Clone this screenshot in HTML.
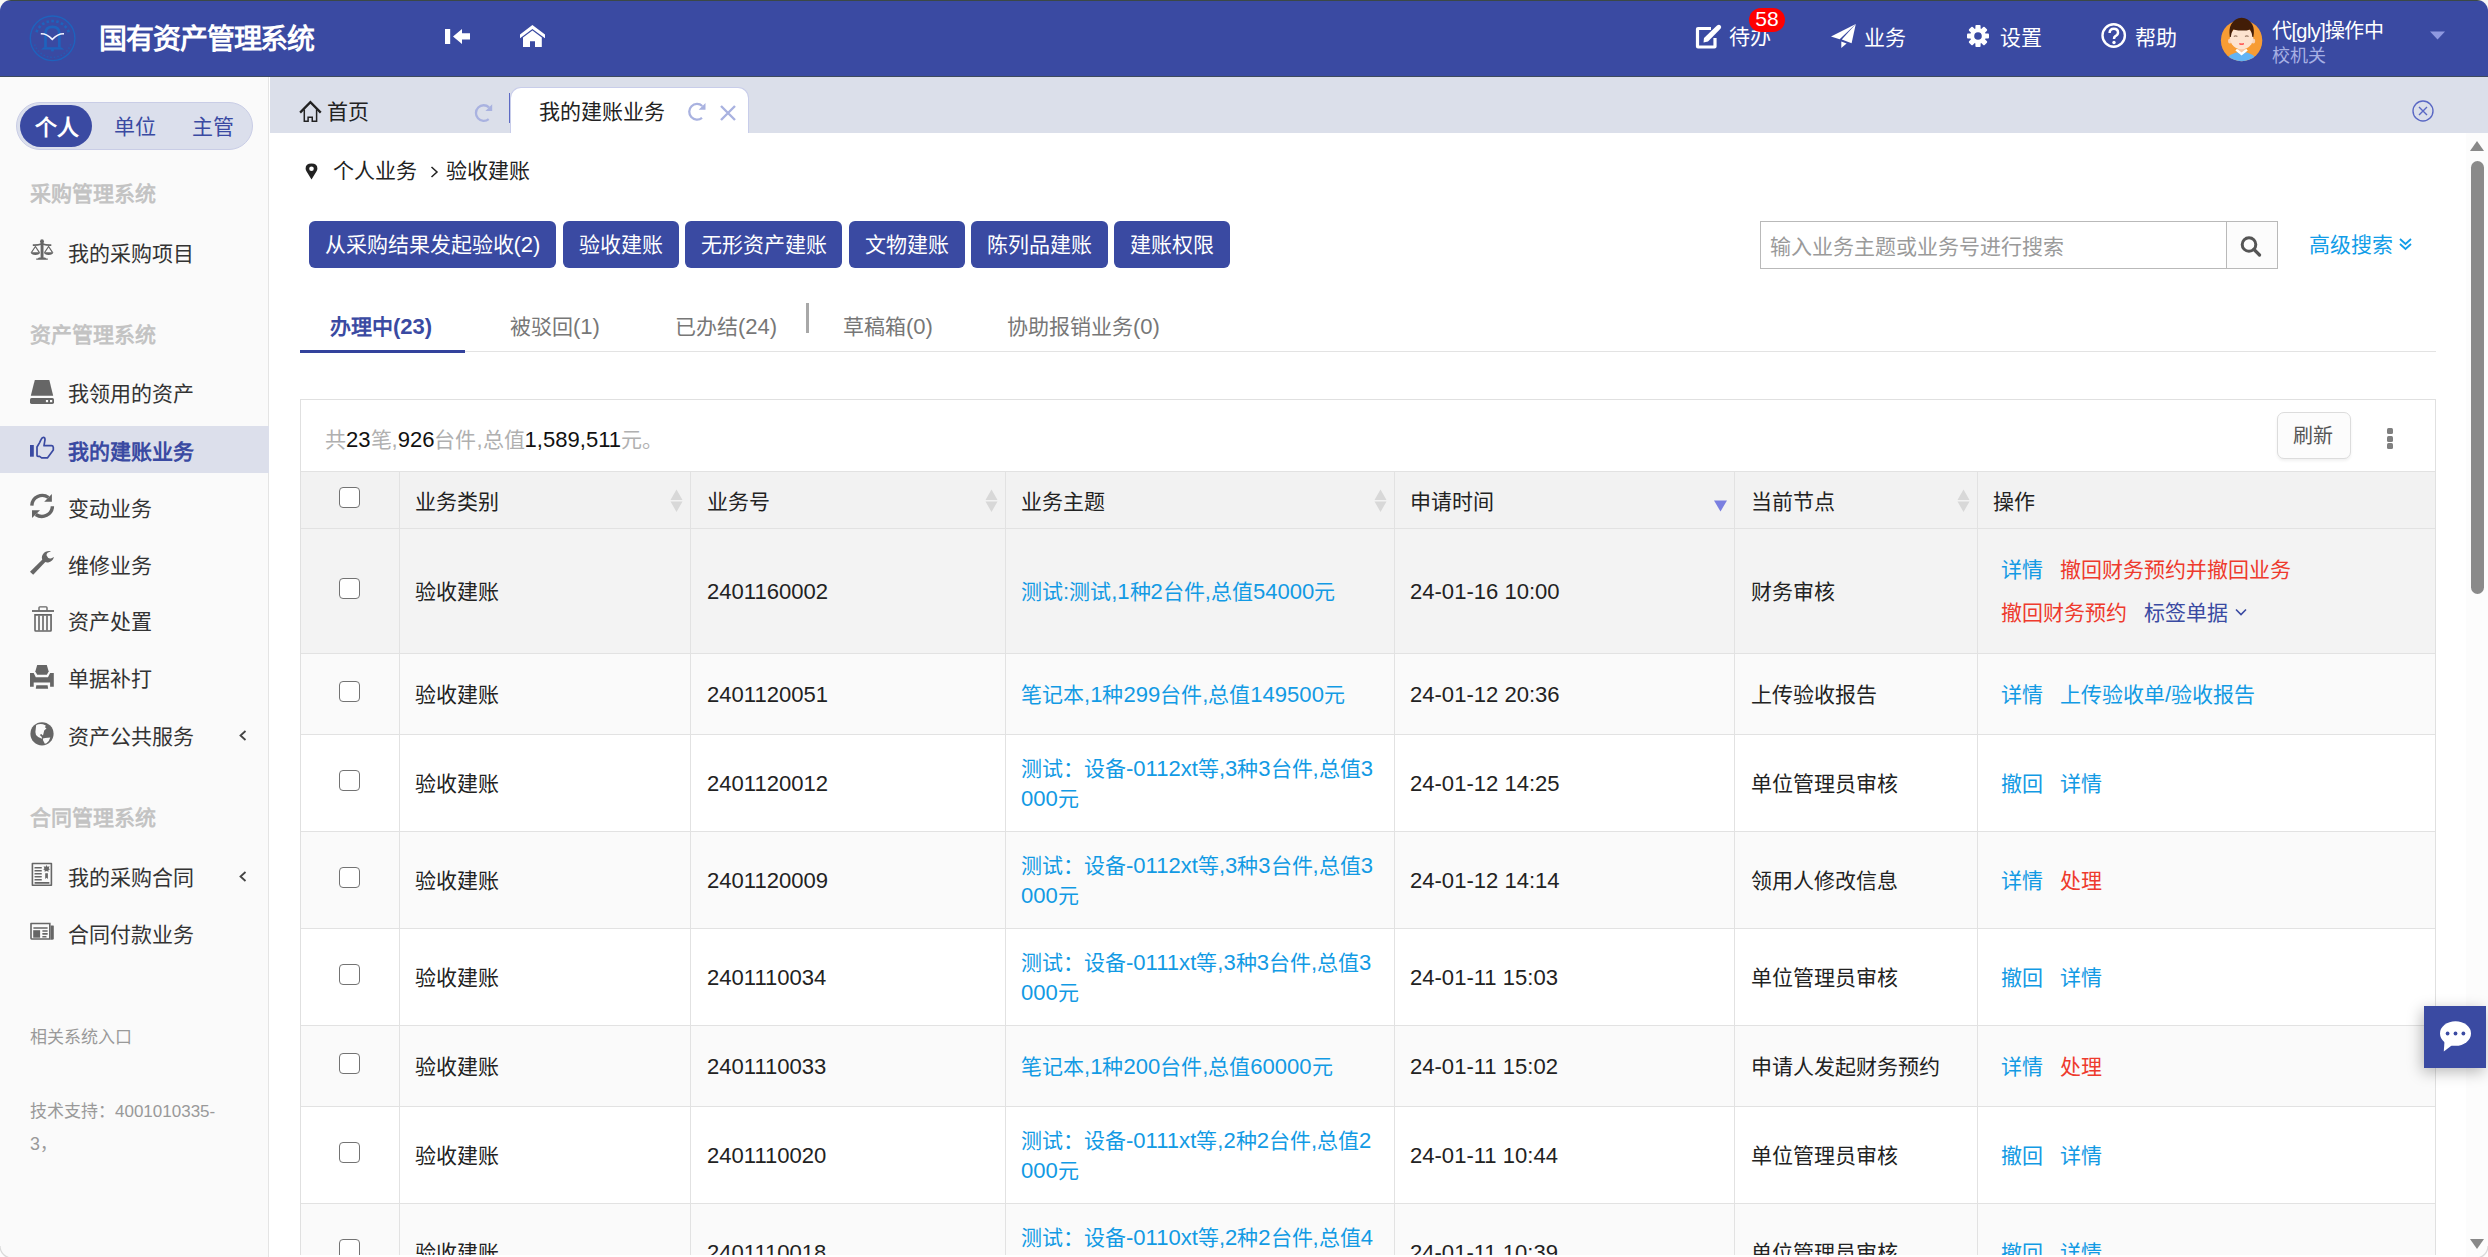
<!DOCTYPE html>
<html lang="zh-CN">
<head>
<meta charset="utf-8">
<style>
*{box-sizing:border-box;margin:0;padding:0}
html,body{width:2488px;height:1257px;overflow:hidden;background:#f8f8f6}
body{font-family:"Liberation Sans",sans-serif;color:#222;position:relative}
.a{position:absolute;white-space:nowrap}
#frame{position:absolute;left:0;top:0;width:2488px;height:1257px;border-radius:11px 11px 0 0;overflow:hidden;background:#fff}
#topline{position:absolute;left:0;top:0;width:2488px;height:1px;background:#3b4846}
#hdr{position:absolute;left:0;top:1px;width:2488px;height:75px;background:#3a4aa2}
#hdrline{position:absolute;left:0;top:76px;width:2488px;height:1px;background:#3d4a5e}
#side{position:absolute;left:0;top:77px;width:269px;height:1180px;background:#fafafa;border-right:1px solid #e4e4e4}
#tabbar{position:absolute;left:270px;top:77px;width:2218px;height:56px;background:#dbdfea}
#main{position:absolute;left:270px;top:133px;width:2196px;height:1124px;background:#fff}
#sbar{position:absolute;left:2466px;top:133px;width:22px;height:1124px;background:#f9f9f9}
.wt{color:#fff}
.l{font-size:1.05em}
.nl .l{font-size:1em}
</style>
</head>
<body>
<div id="frame">
<div id="hdr">
<svg class="a" style="left:25px;top:10px" width="55" height="55" viewBox="0 0 55 55">
<circle cx="27.6" cy="27.35" r="22.3" fill="none" stroke="#1e63bd" stroke-width="1.4"/>
<g fill="#1e63bd"><rect x="10.62" y="18.74" width="2.6" height="2.6" transform="rotate(295.0 11.92 20.04)"/><rect x="13.29" y="14.64" width="2.6" height="2.6" transform="rotate(311.2 14.59 15.94)"/><rect x="17.00" y="11.46" width="2.6" height="2.6" transform="rotate(327.5 18.30 12.76)"/><rect x="21.46" y="9.44" width="2.6" height="2.6" transform="rotate(343.8 22.76 10.74)"/><rect x="26.30" y="8.75" width="2.6" height="2.6" transform="rotate(360.0 27.60 10.05)"/><rect x="31.14" y="9.44" width="2.6" height="2.6" transform="rotate(376.2 32.44 10.74)"/><rect x="35.60" y="11.46" width="2.6" height="2.6" transform="rotate(392.5 36.90 12.76)"/><rect x="39.31" y="14.64" width="2.6" height="2.6" transform="rotate(408.8 40.61 15.94)"/><rect x="41.98" y="18.74" width="2.6" height="2.6" transform="rotate(425.0 43.28 20.04)"/><rect x="44.65" y="33.05" width="1.6" height="1.6" opacity="0.6"/><rect x="43.14" y="36.25" width="1.6" height="1.6" opacity="0.6"/><rect x="41.05" y="39.11" width="1.6" height="1.6" opacity="0.6"/><rect x="38.47" y="41.54" width="1.6" height="1.6" opacity="0.6"/><rect x="35.48" y="43.45" width="1.6" height="1.6" opacity="0.6"/><rect x="32.20" y="44.77" width="1.6" height="1.6" opacity="0.6"/><rect x="28.72" y="45.45" width="1.6" height="1.6" opacity="0.6"/><rect x="25.18" y="45.48" width="1.6" height="1.6" opacity="0.6"/><rect x="21.69" y="44.85" width="1.6" height="1.6" opacity="0.6"/><rect x="18.38" y="43.58" width="1.6" height="1.6" opacity="0.6"/><rect x="15.37" y="41.72" width="1.6" height="1.6" opacity="0.6"/><rect x="12.75" y="39.34" width="1.6" height="1.6" opacity="0.6"/><rect x="10.62" y="36.51" width="1.6" height="1.6" opacity="0.6"/><rect x="9.05" y="33.33" width="1.6" height="1.6" opacity="0.6"/></g>
<path d="M20.5 36.5 V22.5 Q20.5 15.8 27.4 15.8 Q34.3 15.8 34.3 22.5 V36.5" fill="none" stroke="#1e63bd" stroke-width="2.7"/>
<path d="M15.8 38.6 L19 36.2 H36 L39.4 38.6 Z" fill="#1e63bd"/>
<circle cx="27.4" cy="39" r="1.6" fill="#1e63bd"/>
<path d="M15.8 22.8 Q21.5 22.4 27.3 28.3 Q33.2 22.4 39 22.8" fill="none" stroke="#f2f4ff" stroke-width="1.7"/>
</svg>
<div class="a wt" style="left:99px;top:21.5px;font-size:28px;line-height:34px;font-weight:bold;letter-spacing:-1.1px">国有资产管理系统</div>
<svg class="a" style="left:444px;top:26px" width="28" height="19" viewBox="0 0 28 19">
<rect x="1" y="2" width="5.2" height="15" fill="#fff"/>
<path d="M9 9.5 L18 2 V6.2 H26 V12.6 H18 V17 Z" fill="#fff"/>
</svg>
<svg class="a" style="left:518px;top:22px" width="29" height="26" viewBox="0 0 29 26">
<path d="M2 11.5 L14.4 2 L27 11.5 V15.2 L14.4 6 L2 15.2 Z" fill="#fff"/>
<path d="M5 14.5 L14.4 7.6 L23.8 14.5 V24 H17 V18.3 H12 V24 H5 Z" fill="#fff"/>
</svg>
<svg class="a" style="left:1694px;top:22px" width="30" height="28" viewBox="0 0 30 28">
<path d="M17 5.5 H4 Q3.5 5.5 3.5 6 V23.5 Q3.5 24 4 24 H20.5 Q21 24 21 23.5 V15" fill="none" stroke="#fff" stroke-width="3.2"/>
<path d="M9.5 19.5 L10 15 L23 2.5 Q25 1 26.5 2.5 Q28 4 26.5 5.8 L14 18.6 Z" fill="#fff"/>
</svg>
<div class="a wt" style="left:1729px;top:24px;font-size:21px;line-height:24px">待办</div>
<div class="a" style="left:1749px;top:6.5px;width:36px;height:24.5px;border-radius:12px;background:#fe0000"></div>
<div class="a wt" style="left:1749px;top:5.5px;width:36px;height:24px;font-size:20px;line-height:24px;text-align:center"><span class="l">58</span></div>
<svg class="a" style="left:1830px;top:22px" width="28" height="27" viewBox="0 0 28 27">
<path d="M1 13.4 L25.8 1.1 L9.6 16.2 Z" fill="#fff"/>
<path d="M11.8 16.6 L25.8 1.1 L21.6 20.2 Z" fill="#fff"/>
<path d="M11.3 18.4 L16.6 20.4 L11.3 25 Z" fill="#fff"/>
</svg>
<div class="a wt" style="left:1864px;top:25px;font-size:21px;line-height:24px">业务</div>
<svg class="a" style="left:1966px;top:23px" width="24" height="24" viewBox="-12 -12 24 24">
<g fill="#fff"><circle r="7.8"/>
<rect x="-2.6" y="-11" width="5.2" height="22" rx="1"/>
<rect x="-2.6" y="-11" width="5.2" height="22" rx="1" transform="rotate(45)"/>
<rect x="-2.6" y="-11" width="5.2" height="22" rx="1" transform="rotate(90)"/>
<rect x="-2.6" y="-11" width="5.2" height="22" rx="1" transform="rotate(135)"/></g>
<circle r="3.8" fill="#3a4aa2"/>
</svg>
<div class="a wt" style="left:2000px;top:25px;font-size:21px;line-height:24px">设置</div>
<svg class="a" style="left:2100px;top:21px" width="28" height="28" viewBox="0 0 28 28">
<circle cx="13.7" cy="13.5" r="11.2" fill="none" stroke="#fff" stroke-width="2.4"/>
<path d="M9.6 11 Q9.6 6.8 13.8 6.8 Q18 6.8 18 10.6 Q18 13 15.4 14.2 Q14 15 14 17" fill="none" stroke="#fff" stroke-width="2.5"/>
<circle cx="14" cy="20.5" r="1.7" fill="#fff"/>
</svg>
<div class="a wt" style="left:2135px;top:25px;font-size:21px;line-height:24px">帮助</div>
<svg class="a" style="left:2220px;top:16px" width="44" height="46" viewBox="0 0 44 46">
<defs><clipPath id="avc"><circle cx="21.6" cy="23.5" r="20.7"/></clipPath></defs>
<circle cx="21.6" cy="23.5" r="20.7" fill="#f79c34"/>
<g clip-path="url(#avc)">
<path d="M5 46 Q7 36.2 21.6 34.6 Q36 36.2 38 46 Z" fill="#63b4f5"/>
<rect x="18" y="29" width="7.2" height="7" fill="#f7c7a3"/>
<path d="M15.4 33.6 L21.6 38.6 L27.8 33.6 L26.2 31.8 L21.6 35.6 L17 31.8 Z" fill="#fff"/>
</g>
<ellipse cx="9.9" cy="24" rx="1.9" ry="2.6" fill="#f9d3b8"/><ellipse cx="33.3" cy="24" rx="1.9" ry="2.6" fill="#f9d3b8"/>
<ellipse cx="21.6" cy="21" rx="11.6" ry="11.2" fill="#fde3cf"/>
<path d="M9.8 20 Q8.6 12 11.2 7.2 Q15 1 21.6 0.8 Q28.4 1 32.2 7.2 Q34.8 12 33.4 20 L32.4 20 Q32 15.5 30 12.4 Q24 14.8 13.2 12.4 Q11.2 15.5 10.8 20 Z" fill="#421d07"/>
<path d="M13.8 19.4 Q15.6 18.4 17.4 19.4 M25 19.4 Q26.8 18.4 28.6 19.4" fill="none" stroke="#9b7b66" stroke-width="1.1"/>
<path d="M19.4 26.6 Q21.6 27.8 23.8 26.6" fill="none" stroke="#ff3030" stroke-width="1.3"/>
</svg>
<div class="a wt nl" style="left:2272px;top:18.5px;font-size:20px;line-height:22px;letter-spacing:-0.6px">代<span class="l">[gly]</span>操作中</div>
<div class="a" style="left:2272px;top:45px;font-size:18px;line-height:20px;color:#a7b0e4">校机关</div>
<svg class="a" style="left:2430px;top:30px" width="16" height="9" viewBox="0 0 16 9"><path d="M0 0.5 H15 L7.5 8.5 Z" fill="#8f99e0"/></svg>
</div>
<div id="topline"></div>
<div id="hdrline"></div>
<div id="side"><div class="a" style="left:16px;top:25px;width:237px;height:48px;border-radius:24px;background:#dbdfec;border:1px solid #c9cde6"></div>
<div class="a" style="left:20px;top:28px;width:72px;height:42px;border-radius:21px;background:#3a4aa2"></div>
<div class="a" style="left:34.5px;top:38.5px;font-size:22px;line-height:24px;font-weight:bold;color:#fff">个人</div>
<div class="a" style="left:114px;top:38px;font-size:21px;line-height:24px;color:#3a4aa2">单位</div>
<div class="a" style="left:192px;top:38px;font-size:21px;line-height:24px;color:#3a4aa2">主管</div>
<div class="a" style="left:30px;top:105px;font-size:21px;line-height:24px;font-weight:bold;color:#c3c3c3">采购管理系统</div>
<div class="a" style="left:30px;top:246px;font-size:21px;line-height:24px;font-weight:bold;color:#c3c3c3">资产管理系统</div>
<div class="a" style="left:30px;top:729px;font-size:21px;line-height:24px;font-weight:bold;color:#c3c3c3">合同管理系统</div>
<div class="a" style="left:0;top:349px;width:269px;height:47px;background:#dcdfeb"></div>
<svg class="a" style="left:24px;top:155px" width="40" height="40" viewBox="0 0 40 40" fill="#666">
<rect x="16.6" y="9" width="2.9" height="17.5"/><circle cx="18" cy="9.2" r="1.9"/>
<path d="M8.8 12.2 Q13 12.6 18 11 Q23 12.6 27.3 12.2 V14 Q23 14.2 18 12.8 Q13 14.2 8.8 14 Z"/>
<path d="M11.4 13.5 L6.7 20.6 H8.1 L11.4 15.4 L14.6 20.6 H16.1 Z"/><path d="M6.7 20.3 H16.1 Q15.6 23 11.4 23 Q7.2 23 6.7 20.3 Z"/>
<path d="M24.6 13.5 L19.9 20.6 H21.3 L24.6 15.4 L27.8 20.6 H29.3 Z"/><path d="M19.9 20.3 H29.3 Q28.8 23 24.6 23 Q20.4 23 19.9 20.3 Z"/>
<path d="M15 25.5 H21 L22.3 26.4 H23.8 V27.8 H12.2 V26.4 H13.7 Z"/></svg>
<div class="a" style="left:68px;top:165px;font-size:21px;line-height:24px;color:#333">我的采购项目</div>
<svg class="a" style="left:24px;top:296px" width="40" height="40" viewBox="0 0 40 40" fill="#666">
<path d="M10.8 7 H25.3 L29.2 22.8 H6.8 Z"/><rect x="6" y="25" width="24" height="5.9" rx="1.6"/>
<rect x="21.9" y="27" width="2.2" height="2.2" fill="#fafafa"/><rect x="26" y="27" width="2.2" height="2.2" fill="#fafafa"/></svg>
<div class="a" style="left:68px;top:305px;font-size:21px;line-height:24px;color:#333">我领用的资产</div>
<svg class="a" style="left:24px;top:353px" width="40" height="40" viewBox="0 0 40 40">
<rect x="6" y="15" width="3.8" height="11.7" fill="#3a4aa2"/>
<path d="M13 17 V25.5 Q13 26.4 14 26.4 H15.6 L17.6 27.9 H23.4 L29.3 20 V17.3 Q29 15.7 27.6 15.7 H20 L21 9.6 Q21 7.4 19.4 7.4 Q18 7.4 17 9.7 L15.6 12.6 Z" fill="none" stroke="#3a4aa2" stroke-width="1.7" stroke-linejoin="round"/></svg>
<div class="a" style="left:68px;top:363px;font-size:21px;line-height:24px;font-weight:bold;color:#3a4aa2">我的建账业务</div>
<svg class="a" style="left:24px;top:410px" width="40" height="40" viewBox="0 0 40 40" fill="#666">
<path d="M7.8 18.6 A10.5 10.5 0 0 1 24.5 10.5" fill="none" stroke="#666" stroke-width="3.4"/>
<path d="M20.2 14.8 H27.9 V7 Z"/>
<path d="M28.4 19.2 A10.5 10.5 0 0 1 11.8 27.5" fill="none" stroke="#666" stroke-width="3.4"/>
<path d="M16 23.2 H8 V30.9 Z"/></svg>
<div class="a" style="left:68px;top:420px;font-size:21px;line-height:24px;color:#333">变动业务</div>
<svg class="a" style="left:24px;top:467px" width="40" height="40" viewBox="0 0 40 40" fill="#666">
<path d="M6 27.8 L19.2 14.8 L21.8 17.6 L9.2 30.8 Z"/>
<path d="M26.8 7.2 Q21.6 6.6 18.8 10.4 Q16.8 13.6 19 16.8 Q21.6 18.9 25 18.2 Q28.6 17.2 29.8 13.5 L29.6 13.1 Q28 14.8 26 14.5 Q23.6 14.2 22.6 11.6 Q22.2 9.8 23.6 8.8 Q25.2 7.9 26.8 7.6 Z"/></svg>
<div class="a" style="left:68px;top:477px;font-size:21px;line-height:24px;color:#333">维修业务</div>
<svg class="a" style="left:24px;top:524px" width="40" height="40" viewBox="0 0 40 40" fill="#666">
<rect x="8" y="9.1" width="22" height="1.8"/>
<path d="M14.3 9.4 V6.8 Q14.3 5.2 15.8 5.2 H22.2 Q23.7 5.2 23.7 6.8 V9.4 H22.3 V6.6 H15.7 V9.4 Z"/>
<path d="M10.2 13.1 H27.9 V29.3 Q27.9 30.8 26.4 30.8 H11.7 Q10.2 30.8 10.2 29.3 Z M11.8 14.8 V29.2 H26.2 V14.8 Z"/>
<rect x="14.2" y="14.5" width="1.6" height="15"/><rect x="18.2" y="14.5" width="1.6" height="15"/><rect x="22.2" y="14.5" width="1.6" height="15"/></svg>
<div class="a" style="left:68px;top:533px;font-size:21px;line-height:24px;color:#333">资产处置</div>
<svg class="a" style="left:24px;top:581px" width="40" height="40" viewBox="0 0 40 40" fill="#666">
<path d="M13.2 7 H22.8 L24.7 13.5 L22.8 16.7 H13.2 L11.3 13.5 Z"/>
<path d="M6 15.1 H9.7 L11.8 19.3 H24 L26.1 15.1 H29.8 V28.8 H26.1 V24.5 H9.7 V28.8 H6 Z"/>
<path d="M12.3 27.2 H23.6 L24.1 30.8 H11.8 Z"/></svg>
<div class="a" style="left:68px;top:590px;font-size:21px;line-height:24px;color:#333">单据补打</div>
<svg class="a" style="left:24px;top:638px" width="40" height="40" viewBox="0 0 40 40">
<circle cx="18" cy="18.8" r="11.6" fill="#666"/>
<path d="M12.2 10 Q15 8.6 19 9.2 L21.8 10.6 L21 12.3 L22.5 13.6 L20.2 15.5 L19 20.5 L17.2 19 L15.8 20 L17.8 22 L18 23.8 Q13.6 22.4 12 20 Q11 16.5 11.8 13.2 Z" fill="#fafafa"/>
<path d="M18.8 23.5 L21.2 22.9 L26.3 22.5 Q25.5 25.8 22.5 28.2 L20.8 28.8 L19.2 25.6 Z" fill="#fafafa"/></svg>
<div class="a" style="left:68px;top:648px;font-size:21px;line-height:24px;color:#333">资产公共服务</div>
<svg class="a" style="left:24px;top:779px" width="40" height="40" viewBox="0 0 40 40" fill="#666">
<path d="M7.6 7.6 Q7.6 6.8 8.4 6.8 H27.4 Q28.2 6.8 28.2 7.6 V29.2 Q28.2 30 27.4 30 H8.4 Q7.6 30 7.6 29.2 Z M9.2 8.3 V28.5 H26.6 V8.3 Z"/>
<rect x="10.4" y="11.1" width="7.5" height="1.5" rx="0.7"/><rect x="10.4" y="14.1" width="7.5" height="1.5" rx="0.7"/><rect x="10.4" y="17.1" width="7.5" height="1.5" rx="0.7"/><rect x="10.4" y="20" width="7.5" height="1.5" rx="0.7"/><rect x="10.4" y="23.1" width="7.5" height="1.5" rx="0.7"/>
<rect x="10.4" y="26.1" width="15.2" height="1.6" rx="0.8"/>
<path d="M22.5 9 L23.4 10.8 L25.5 10.2 L24.8 12.2 L26 13.4 L24.4 14 L24.6 15.8 L22.5 15 L20.6 15.8 L20.7 14 L19.2 13.4 L20.4 12.2 L19.6 10.2 L21.6 10.8 Z"/>
<path d="M21.2 17.3 H23.9 V23 L22.5 21.8 L21.2 23 Z"/></svg>
<div class="a" style="left:68px;top:789px;font-size:21px;line-height:24px;color:#333">我的采购合同</div>
<svg class="a" style="left:24px;top:836px" width="40" height="40" viewBox="0 0 40 40" fill="#666">
<path d="M6.2 10.6 Q6.2 9.8 7 9.8 H26.6 V26.7 H7.6 Q6.2 26.7 6.2 25.3 Z M7.8 11.3 V25.2 H25 V11.3 Z"/>
<path d="M26.6 12.6 H29.4 Q29.8 12.6 29.8 13 V25.2 Q29.8 26.7 28.3 26.7 H26.6 Z"/>
<rect x="9.2" y="14.2" width="14.6" height="1.6" rx="0.7"/><rect x="9.2" y="17.2" width="6.9" height="7.5"/>
<rect x="18.2" y="17.2" width="5.6" height="1.6" rx="0.7"/><rect x="18.2" y="20.1" width="5.6" height="1.6" rx="0.7"/><rect x="18.2" y="23" width="4.4" height="1.6" rx="0.7"/></svg>
<div class="a" style="left:68px;top:846px;font-size:21px;line-height:24px;color:#333">合同付款业务</div>
<svg class="a" style="left:238px;top:653px" width="10" height="11" viewBox="0 0 10 11"><path d="M7.5 1 L2.5 5.5 L7.5 10" fill="none" stroke="#444" stroke-width="1.8"/></svg>
<svg class="a" style="left:238px;top:794px" width="10" height="11" viewBox="0 0 10 11"><path d="M7.5 1 L2.5 5.5 L7.5 10" fill="none" stroke="#444" stroke-width="1.8"/></svg>
<div class="a" style="left:30px;top:950.5px;font-size:17px;line-height:20px;color:#999">相关系统入口</div>
<div class="a nl" style="left:30px;top:1025px;font-size:17px;line-height:20px;color:#999">技术支持：<span class="l">4001010335-</span></div>
<div class="a" style="left:30px;top:1057px;font-size:17px;line-height:20px;color:#999"><span class="l">3</span>，</div></div>
<div id="tabbar">
<svg class="a" style="left:29px;top:23px" width="23" height="23" viewBox="0 0 23 23"><path d="M1.1 12.6 L11.4 2.2 L21.75 12.6" fill="none" stroke="#222" stroke-width="2.3"/><path d="M5.3 9.5 V21.2 H9.1 V17.2 H13.25 V21.2 H17.6 V9.5" fill="none" stroke="#222" stroke-width="1.5"/></svg>
<div class="a" style="left:57px;top:23px;font-size:21px;line-height:24px;color:#222">首页</div>
<svg class="a" style="left:203px;top:26px" width="22" height="22" viewBox="0 0 22 22"><path d="M15.7 16.1 A7.8 7.8 0 1 1 16 4.3" fill="none" stroke="#a9b2e0" stroke-width="2.3"/><path d="M12.4 8 L19.2 8 L19.2 1.3 Z" fill="#a9b2e0"/></svg>
<div class="a" style="left:239px;top:16px;width:1px;height:30px;background:#5d6ac4"></div>
<div class="a" style="left:240px;top:10px;width:239px;height:47px;background:#fff;border:1px solid #c8cdea;border-bottom:none;border-radius:11px 11px 0 0"></div>
<div class="a" style="left:269px;top:23px;font-size:21px;line-height:24px;color:#222">我的建账业务</div>
<svg class="a" style="left:416px;top:25px" width="22" height="22" viewBox="0 0 22 22"><path d="M16 15.8 A7.8 7.8 0 1 1 16.3 4" fill="none" stroke="#a9b2e0" stroke-width="2.3"/><path d="M12.7 7.7 L19.5 7.7 L19.5 1 Z" fill="#a9b2e0"/></svg>
<svg class="a" style="left:449px;top:27px" width="18" height="18" viewBox="0 0 18 18"><path d="M2 2 L16 16 M16 2 L2 16" stroke="#a9b2e0" stroke-width="2.4"/></svg>
<svg class="a" style="left:2141px;top:22px" width="24" height="24" viewBox="0 0 24 24"><circle cx="12" cy="12" r="10" fill="none" stroke="#5a68c4" stroke-width="1.4"/><path d="M8 8 L16 16 M16 8 L8 16" stroke="#5a68c4" stroke-width="1.4"/></svg>
</div>
<div id="main"></div>
<!--C-->
<svg class="a" style="left:305px;top:163px" width="13" height="17" viewBox="0 0 13 17"><path d="M6.5 16.5 L1.6 8.6 Q0.6 7 0.6 5.6 Q0.6 0.6 6.5 0.6 Q12.4 0.6 12.4 5.6 Q12.4 7 11.4 8.6 Z" fill="#222"/><circle cx="6.5" cy="5.7" r="2.3" fill="#fff"/></svg>
<div class="a" style="left:333px;top:159.0px;font-size:21px;line-height:24px;color:#222;">个人业务</div>
<svg class="a" style="left:430px;top:166px" width="9" height="12" viewBox="0 0 9 12"><path d="M1.5 1 L7 6 L1.5 11" fill="none" stroke="#222" stroke-width="1.5"/></svg>
<div class="a" style="left:446px;top:159.0px;font-size:21px;line-height:24px;color:#222;">验收建账</div>
<div class="a" style="left:309px;top:221px;width:247px;height:47px;background:#3a4aa2;border-radius:6px;color:#fff;font-size:21px;line-height:48px;text-align:center">从采购结果发起验收<span class="l">(2)</span></div>
<div class="a" style="left:563px;top:221px;width:116px;height:47px;background:#3a4aa2;border-radius:6px;color:#fff;font-size:21px;line-height:48px;text-align:center">验收建账</div>
<div class="a" style="left:685px;top:221px;width:157px;height:47px;background:#3a4aa2;border-radius:6px;color:#fff;font-size:21px;line-height:48px;text-align:center">无形资产建账</div>
<div class="a" style="left:849px;top:221px;width:116px;height:47px;background:#3a4aa2;border-radius:6px;color:#fff;font-size:21px;line-height:48px;text-align:center">文物建账</div>
<div class="a" style="left:971px;top:221px;width:137px;height:47px;background:#3a4aa2;border-radius:6px;color:#fff;font-size:21px;line-height:48px;text-align:center">陈列品建账</div>
<div class="a" style="left:1114px;top:221px;width:116px;height:47px;background:#3a4aa2;border-radius:6px;color:#fff;font-size:21px;line-height:48px;text-align:center">建账权限</div>
<div class="a" style="left:1760px;top:221px;width:467px;height:48px;border:1px solid #b9b9b9;background:#fff"></div>
<div class="a" style="left:2227px;top:221px;width:51px;height:48px;border:1px solid #b9b9b9;border-left:none;background:#fcfcfc"></div>
<svg class="a" style="left:2238px;top:233px" width="26" height="26" viewBox="0 0 26 26"><circle cx="11" cy="11.5" r="6.8" fill="none" stroke="#555" stroke-width="3"/><path d="M16 16.5 L21.5 22" stroke="#555" stroke-width="3.2" stroke-linecap="round"/></svg>
<div class="a" style="left:1770px;top:234.5px;font-size:21px;line-height:24px;color:#9a9a9a;">输入业务主题或业务号进行搜索</div>
<div class="a" style="left:2309px;top:232.5px;font-size:21px;line-height:24px;color:#129de8;">高级搜索</div>
<svg class="a" style="left:2398px;top:237px" width="15" height="14" viewBox="0 0 15 14"><path d="M2 2 L7.5 7 L13 2 M2 7 L7.5 12 L13 7" fill="none" stroke="#129de8" stroke-width="1.8"/></svg>
<div class="a" style="left:330px;top:315.0px;font-size:21px;line-height:24px;color:#3a4aa2;font-weight:bold">办理中<span class="l">(23)</span></div>
<div class="a" style="left:510px;top:315.0px;font-size:21px;line-height:24px;color:#777;">被驳回<span class="l">(1)</span></div>
<div class="a" style="left:675px;top:315.0px;font-size:21px;line-height:24px;color:#777;">已办结<span class="l">(24)</span></div>
<div class="a" style="left:806px;top:303px;width:3px;height:30px;background:#a8a8a8"></div>
<div class="a" style="left:843px;top:314.5px;font-size:21px;line-height:24px;color:#777;">草稿箱<span class="l">(0)</span></div>
<div class="a" style="left:1007px;top:314.5px;font-size:21px;line-height:24px;color:#777;">协助报销业务<span class="l">(0)</span></div>
<div class="a" style="left:300px;top:351px;width:2136px;height:1px;background:#e3e3e3"></div>
<div class="a" style="left:300px;top:350px;width:165px;height:3px;background:#33429c"></div>
<div class="a" style="left:300px;top:399px;width:2136px;height:900px;border:1px solid #e0e0e0;background:#fff"></div>
<div class="a" style="left:325px;top:428px;font-size:21px;line-height:24px;color:#b0b0b0">共<span style="color:#111"><span class="l">23</span></span>笔<span class="l">,</span><span style="color:#111"><span class="l">926</span></span>台件<span class="l">,</span>总值<span style="color:#111"><span class="l">1,589,511</span></span>元。</div>
<div class="a" style="left:2277px;top:412px;width:74px;height:47px;border:1px solid #dcdcdc;border-radius:7px;background:#fcfcfc;box-shadow:0 2px 3px rgba(0,0,0,0.06)"></div>
<div class="a" style="left:2293px;top:424.0px;font-size:20px;line-height:24px;color:#555;">刷新</div>
<div class="a" style="left:2387px;top:428px;width:6px;height:6px;border-radius:1.5px;background:#808080"></div>
<div class="a" style="left:2387px;top:435.5px;width:6px;height:6px;border-radius:1.5px;background:#808080"></div>
<div class="a" style="left:2387px;top:443px;width:6px;height:6px;border-radius:1.5px;background:#808080"></div>
<div class="a" style="left:301px;top:471px;width:2134px;height:57px;background:#f2f2f2;border-top:1px solid #e2e2e2"></div>
<div class="a" style="left:301px;top:528px;width:2134px;height:125px;background:#f3f3f3;border-top:1px solid #e2e2e2"></div>
<div class="a" style="left:301px;top:653px;width:2134px;height:81px;background:#fafafa;border-top:1px solid #e2e2e2"></div>
<div class="a" style="left:301px;top:734px;width:2134px;height:97px;background:#fff;border-top:1px solid #e2e2e2"></div>
<div class="a" style="left:301px;top:831px;width:2134px;height:97px;background:#fafafa;border-top:1px solid #e2e2e2"></div>
<div class="a" style="left:301px;top:928px;width:2134px;height:97px;background:#fff;border-top:1px solid #e2e2e2"></div>
<div class="a" style="left:301px;top:1025px;width:2134px;height:81px;background:#fafafa;border-top:1px solid #e2e2e2"></div>
<div class="a" style="left:301px;top:1106px;width:2134px;height:97px;background:#fff;border-top:1px solid #e2e2e2"></div>
<div class="a" style="left:301px;top:1203px;width:2134px;height:97px;background:#fafafa;border-top:1px solid #e2e2e2"></div>
<div class="a" style="left:399.0px;top:471px;width:1px;height:830px;background:#e2e2e2"></div>
<div class="a" style="left:690.0px;top:471px;width:1px;height:830px;background:#e2e2e2"></div>
<div class="a" style="left:1005.0px;top:471px;width:1px;height:830px;background:#e2e2e2"></div>
<div class="a" style="left:1394.2px;top:471px;width:1px;height:830px;background:#e2e2e2"></div>
<div class="a" style="left:1733.9px;top:471px;width:1px;height:830px;background:#e2e2e2"></div>
<div class="a" style="left:1976.8px;top:471px;width:1px;height:830px;background:#e2e2e2"></div>
<div class="a" style="left:339px;top:487px;width:21px;height:21px;border:1.6px solid #737373;border-radius:4px;background:#fff"></div>
<div class="a" style="left:415px;top:489.5px;font-size:21px;line-height:24px;color:#222;">业务类别</div>
<div class="a" style="left:707px;top:489.5px;font-size:21px;line-height:24px;color:#222;">业务号</div>
<div class="a" style="left:1021px;top:489.5px;font-size:21px;line-height:24px;color:#222;">业务主题</div>
<div class="a" style="left:1410px;top:489.5px;font-size:21px;line-height:24px;color:#222;">申请时间</div>
<div class="a" style="left:1751px;top:489.5px;font-size:21px;line-height:24px;color:#222;">当前节点</div>
<div class="a" style="left:1993px;top:489.5px;font-size:21px;line-height:24px;color:#222;">操作</div>
<svg class="a" style="left:669.5px;top:489px" width="13" height="24" viewBox="0 0 13 24"><path d="M6.5 0.5 L12.5 11 H0.5 Z M0.5 12.6 H12.5 L6.5 23 Z" fill="#d8d8d8"/></svg>
<svg class="a" style="left:984.5px;top:489px" width="13" height="24" viewBox="0 0 13 24"><path d="M6.5 0.5 L12.5 11 H0.5 Z M0.5 12.6 H12.5 L6.5 23 Z" fill="#d8d8d8"/></svg>
<svg class="a" style="left:1373.5px;top:489px" width="13" height="24" viewBox="0 0 13 24"><path d="M6.5 0.5 L12.5 11 H0.5 Z M0.5 12.6 H12.5 L6.5 23 Z" fill="#d8d8d8"/></svg>
<svg class="a" style="left:1957px;top:489px" width="13" height="24" viewBox="0 0 13 24"><path d="M6.5 0.5 L12.5 11 H0.5 Z M0.5 12.6 H12.5 L6.5 23 Z" fill="#d8d8d8"/></svg>
<svg class="a" style="left:1714px;top:500px" width="13" height="12" viewBox="0 0 13 12"><path d="M0 0.5 H13 L6.5 11.5 Z" fill="#7a7fe0"/></svg>
<div class="a" style="left:339px;top:578px;width:21px;height:21px;border:1.6px solid #737373;border-radius:4px;background:#fff"></div>
<div class="a" style="left:415px;top:580.0px;font-size:21px;line-height:24px;color:#222;">验收建账</div>
<div class="a" style="left:707px;top:580.0px;font-size:21px;line-height:24px;color:#222;"><span class="l">2401160002</span></div>
<div class="a" style="left:1021px;top:580.0px;font-size:21px;line-height:24px;color:#129ae4;">测试<span class="l">:</span>测试<span class="l">,1</span>种<span class="l">2</span>台件<span class="l">,</span>总值<span class="l">54000</span>元</div>
<div class="a" style="left:1410px;top:580.0px;font-size:21px;line-height:24px;color:#222;"><span class="l">24-01-16 10:00</span></div>
<div class="a" style="left:1751px;top:580.0px;font-size:21px;line-height:24px;color:#222;">财务审核</div>
<div class="a" style="left:339px;top:681px;width:21px;height:21px;border:1.6px solid #737373;border-radius:4px;background:#fff"></div>
<div class="a" style="left:415px;top:683.0px;font-size:21px;line-height:24px;color:#222;">验收建账</div>
<div class="a" style="left:707px;top:683.0px;font-size:21px;line-height:24px;color:#222;"><span class="l">2401120051</span></div>
<div class="a" style="left:1021px;top:683.0px;font-size:21px;line-height:24px;color:#129ae4;">笔记本<span class="l">,1</span>种<span class="l">299</span>台件<span class="l">,</span>总值<span class="l">149500</span>元</div>
<div class="a" style="left:1410px;top:683.0px;font-size:21px;line-height:24px;color:#222;"><span class="l">24-01-12 20:36</span></div>
<div class="a" style="left:1751px;top:683.0px;font-size:21px;line-height:24px;color:#222;">上传验收报告</div>
<div class="a" style="left:2001px;top:683.0px;font-size:21px;line-height:24px;color:#129ae4;">详情</div>
<div class="a" style="left:2060px;top:683.0px;font-size:21px;line-height:24px;color:#129ae4;">上传验收单<span class="l">/</span>验收报告</div>
<div class="a" style="left:339px;top:770px;width:21px;height:21px;border:1.6px solid #737373;border-radius:4px;background:#fff"></div>
<div class="a" style="left:415px;top:772.0px;font-size:21px;line-height:24px;color:#222;">验收建账</div>
<div class="a" style="left:707px;top:772.0px;font-size:21px;line-height:24px;color:#222;"><span class="l">2401120012</span></div>
<div class="a" style="left:1021px;top:757.0px;font-size:21px;line-height:24px;color:#129ae4;">测试：设备<span class="l">-0112xt</span>等<span class="l">,3</span>种<span class="l">3</span>台件<span class="l">,</span>总值<span class="l">3</span></div>
<div class="a" style="left:1021px;top:787.0px;font-size:21px;line-height:24px;color:#129ae4;"><span class="l">000</span>元</div>
<div class="a" style="left:1410px;top:772.0px;font-size:21px;line-height:24px;color:#222;"><span class="l">24-01-12 14:25</span></div>
<div class="a" style="left:1751px;top:772.0px;font-size:21px;line-height:24px;color:#222;">单位管理员审核</div>
<div class="a" style="left:2001px;top:772.0px;font-size:21px;line-height:24px;color:#129ae4;">撤回</div>
<div class="a" style="left:2060px;top:772.0px;font-size:21px;line-height:24px;color:#129ae4;">详情</div>
<div class="a" style="left:339px;top:867px;width:21px;height:21px;border:1.6px solid #737373;border-radius:4px;background:#fff"></div>
<div class="a" style="left:415px;top:869.0px;font-size:21px;line-height:24px;color:#222;">验收建账</div>
<div class="a" style="left:707px;top:869.0px;font-size:21px;line-height:24px;color:#222;"><span class="l">2401120009</span></div>
<div class="a" style="left:1021px;top:854.0px;font-size:21px;line-height:24px;color:#129ae4;">测试：设备<span class="l">-0112xt</span>等<span class="l">,3</span>种<span class="l">3</span>台件<span class="l">,</span>总值<span class="l">3</span></div>
<div class="a" style="left:1021px;top:884.0px;font-size:21px;line-height:24px;color:#129ae4;"><span class="l">000</span>元</div>
<div class="a" style="left:1410px;top:869.0px;font-size:21px;line-height:24px;color:#222;"><span class="l">24-01-12 14:14</span></div>
<div class="a" style="left:1751px;top:869.0px;font-size:21px;line-height:24px;color:#222;">领用人修改信息</div>
<div class="a" style="left:2001px;top:869.0px;font-size:21px;line-height:24px;color:#129ae4;">详情</div>
<div class="a" style="left:2060px;top:869.0px;font-size:21px;line-height:24px;color:#ee3a2d;">处理</div>
<div class="a" style="left:339px;top:964px;width:21px;height:21px;border:1.6px solid #737373;border-radius:4px;background:#fff"></div>
<div class="a" style="left:415px;top:966.0px;font-size:21px;line-height:24px;color:#222;">验收建账</div>
<div class="a" style="left:707px;top:966.0px;font-size:21px;line-height:24px;color:#222;"><span class="l">2401110034</span></div>
<div class="a" style="left:1021px;top:951.0px;font-size:21px;line-height:24px;color:#129ae4;">测试：设备<span class="l">-0111xt</span>等<span class="l">,3</span>种<span class="l">3</span>台件<span class="l">,</span>总值<span class="l">3</span></div>
<div class="a" style="left:1021px;top:981.0px;font-size:21px;line-height:24px;color:#129ae4;"><span class="l">000</span>元</div>
<div class="a" style="left:1410px;top:966.0px;font-size:21px;line-height:24px;color:#222;"><span class="l">24-01-11 15:03</span></div>
<div class="a" style="left:1751px;top:966.0px;font-size:21px;line-height:24px;color:#222;">单位管理员审核</div>
<div class="a" style="left:2001px;top:966.0px;font-size:21px;line-height:24px;color:#129ae4;">撤回</div>
<div class="a" style="left:2060px;top:966.0px;font-size:21px;line-height:24px;color:#129ae4;">详情</div>
<div class="a" style="left:339px;top:1053px;width:21px;height:21px;border:1.6px solid #737373;border-radius:4px;background:#fff"></div>
<div class="a" style="left:415px;top:1055.0px;font-size:21px;line-height:24px;color:#222;">验收建账</div>
<div class="a" style="left:707px;top:1055.0px;font-size:21px;line-height:24px;color:#222;"><span class="l">2401110033</span></div>
<div class="a" style="left:1021px;top:1055.0px;font-size:21px;line-height:24px;color:#129ae4;">笔记本<span class="l">,1</span>种<span class="l">200</span>台件<span class="l">,</span>总值<span class="l">60000</span>元</div>
<div class="a" style="left:1410px;top:1055.0px;font-size:21px;line-height:24px;color:#222;"><span class="l">24-01-11 15:02</span></div>
<div class="a" style="left:1751px;top:1055.0px;font-size:21px;line-height:24px;color:#222;">申请人发起财务预约</div>
<div class="a" style="left:2001px;top:1055.0px;font-size:21px;line-height:24px;color:#129ae4;">详情</div>
<div class="a" style="left:2060px;top:1055.0px;font-size:21px;line-height:24px;color:#ee3a2d;">处理</div>
<div class="a" style="left:339px;top:1142px;width:21px;height:21px;border:1.6px solid #737373;border-radius:4px;background:#fff"></div>
<div class="a" style="left:415px;top:1144.0px;font-size:21px;line-height:24px;color:#222;">验收建账</div>
<div class="a" style="left:707px;top:1144.0px;font-size:21px;line-height:24px;color:#222;"><span class="l">2401110020</span></div>
<div class="a" style="left:1021px;top:1129.0px;font-size:21px;line-height:24px;color:#129ae4;">测试：设备<span class="l">-0111xt</span>等<span class="l">,2</span>种<span class="l">2</span>台件<span class="l">,</span>总值<span class="l">2</span></div>
<div class="a" style="left:1021px;top:1159.0px;font-size:21px;line-height:24px;color:#129ae4;"><span class="l">000</span>元</div>
<div class="a" style="left:1410px;top:1144.0px;font-size:21px;line-height:24px;color:#222;"><span class="l">24-01-11 10:44</span></div>
<div class="a" style="left:1751px;top:1144.0px;font-size:21px;line-height:24px;color:#222;">单位管理员审核</div>
<div class="a" style="left:2001px;top:1144.0px;font-size:21px;line-height:24px;color:#129ae4;">撤回</div>
<div class="a" style="left:2060px;top:1144.0px;font-size:21px;line-height:24px;color:#129ae4;">详情</div>
<div class="a" style="left:339px;top:1239px;width:21px;height:21px;border:1.6px solid #737373;border-radius:4px;background:#fff"></div>
<div class="a" style="left:415px;top:1241.0px;font-size:21px;line-height:24px;color:#222;">验收建账</div>
<div class="a" style="left:707px;top:1241.0px;font-size:21px;line-height:24px;color:#222;"><span class="l">2401110018</span></div>
<div class="a" style="left:1021px;top:1226.0px;font-size:21px;line-height:24px;color:#129ae4;">测试：设备<span class="l">-0110xt</span>等<span class="l">,2</span>种<span class="l">2</span>台件<span class="l">,</span>总值<span class="l">4</span></div>
<div class="a" style="left:1021px;top:1256.0px;font-size:21px;line-height:24px;color:#129ae4;"><span class="l">000</span>元</div>
<div class="a" style="left:1410px;top:1241.0px;font-size:21px;line-height:24px;color:#222;"><span class="l">24-01-11 10:39</span></div>
<div class="a" style="left:1751px;top:1241.0px;font-size:21px;line-height:24px;color:#222;">单位管理员审核</div>
<div class="a" style="left:2001px;top:1241.0px;font-size:21px;line-height:24px;color:#129ae4;">撤回</div>
<div class="a" style="left:2060px;top:1241.0px;font-size:21px;line-height:24px;color:#129ae4;">详情</div>
<div class="a" style="left:2001px;top:557.5px;font-size:21px;line-height:24px;color:#129ae4;">详情</div>
<div class="a" style="left:2060px;top:557.5px;font-size:21px;line-height:24px;color:#ee3a2d;">撤回财务预约并撤回业务</div>
<div class="a" style="left:2001px;top:600.5px;font-size:21px;line-height:24px;color:#ee3a2d;">撤回财务预约</div>
<div class="a" style="left:2144px;top:600.5px;font-size:21px;line-height:24px;color:#3a4aa2;">标签单据</div>
<svg class="a" style="left:2234px;top:607px" width="14" height="10" viewBox="0 0 14 10"><path d="M2 2.5 L7 7.5 L12 2.5" fill="none" stroke="#3a4aa2" stroke-width="1.6"/></svg>
<div class="a" style="left:2466px;top:133px;width:22px;height:1124px;background:#fcfcfc"></div>
<svg class="a" style="left:2469px;top:140px" width="16" height="12" viewBox="0 0 16 12"><path d="M8 1 L15 11 H1 Z" fill="#888"/></svg>
<div class="a" style="left:2471px;top:161px;width:13px;height:433px;border-radius:6.5px;background:#8a8a8a"></div>
<svg class="a" style="left:2469px;top:1238px" width="16" height="12" viewBox="0 0 16 12"><path d="M1 1 H15 L8 11 Z" fill="#888"/></svg>
<div class="a" style="left:2424px;top:1006px;width:62px;height:62px;background:#3a4aa2;box-shadow:-2px 4px 14px rgba(0,0,0,0.28)"></div>
<svg class="a" style="left:2438px;top:1020px" width="36" height="34" viewBox="0 0 36 34"><ellipse cx="17.5" cy="13.5" rx="15.5" ry="12.3" fill="#fff"/><path d="M6.5 21 L5.8 31.5 L15 24.5 Z" fill="#fff"/><circle cx="9.6" cy="13.5" r="1.9" fill="#3a4aa2"/><circle cx="17.5" cy="13.5" r="1.9" fill="#3a4aa2"/><circle cx="25.4" cy="13.5" r="1.9" fill="#3a4aa2"/></svg>
<!--/C-->
<div class="a" style="left:270px;top:1255px;width:2196px;height:2px;background:#fff"></div>
<svg class="a" style="left:0;top:1246px" width="12" height="12" viewBox="0 0 12 12"><path d="M0 0 A12 12 0 0 0 12 12 H0 Z" fill="#fdfdfd"/><path d="M0 0 A12 12 0 0 0 12 12" fill="none" stroke="#dadada" stroke-width="1.2"/></svg>
<svg class="a" style="left:2476px;top:1246px" width="12" height="12" viewBox="0 0 12 12"><path d="M12 0 A12 12 0 0 1 0 12 H12 Z" fill="#fdfdfd"/><path d="M12 0 A12 12 0 0 1 0 12" fill="none" stroke="#dadada" stroke-width="1.2"/></svg>
</div>
</body>
</html>
